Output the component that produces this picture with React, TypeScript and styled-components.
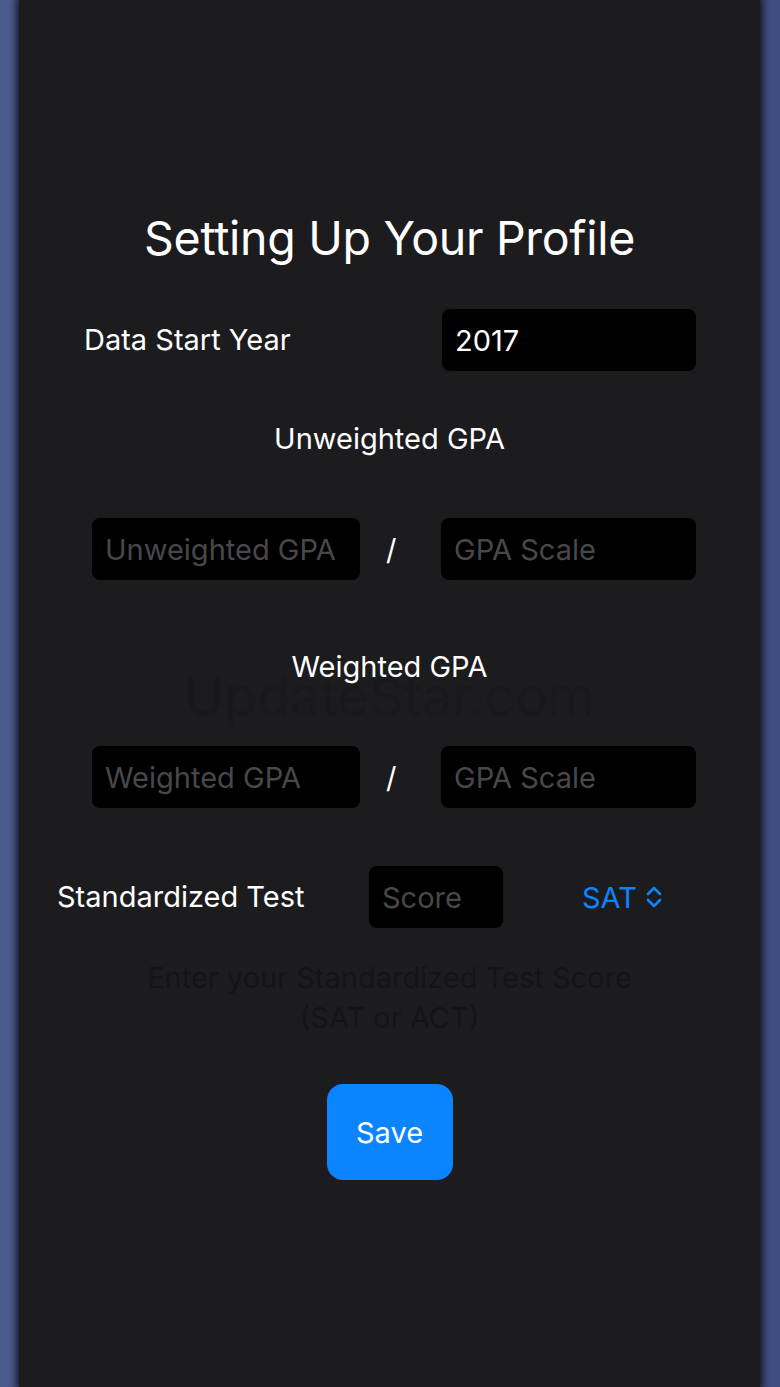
import React from "react";
import styled, { createGlobalStyle } from "styled-components";

const Global = createGlobalStyle`
  html, body { margin: 0; padding: 0; background: #4a5888; }
  body { font-family: Inter, "Noto Sans", "Liberation Sans", sans-serif; }
  * { box-sizing: border-box; }
`;

const Page = styled.div`
  width: 780px;
  height: 1387px;
  background: linear-gradient(90deg, #4d5b8c 0%, #46548a 50%, #3f4d80 100%);
  display: flex;
  overflow: hidden;
`;

const Sheet = styled.div`
  position: relative;
  margin-left: 19px;
  width: 741px;
  height: 100%;
  background: #1c1c1e;
  box-shadow: 0 0 7px 3px rgba(12, 14, 24, 0.85);
  display: flex;
  flex-direction: column;
  align-items: center;
  padding-top: 210px;
  color: #fff;
`;

const Title = styled.h1`
  margin: 0;
  font-size: 46.5px;
  line-height: 56px;
  font-weight: 400;
  letter-spacing: -0.3px;
`;

const Row = styled.div<{ $top: number; $left: number; $width: number }>`
  margin-top: ${(p) => p.$top}px;
  align-self: flex-start;
  margin-left: ${(p) => p.$left}px;
  width: ${(p) => p.$width}px;
  height: 62px;
  display: flex;
  align-items: center;
`;

const Label = styled.span<{ $width?: number }>`
  font-size: 29px;
  line-height: 34px;
  ${(p) => (p.$width ? `width: ${p.$width}px;` : "flex: 1;")}
`;

const SectionLabel = styled.div<{ $top: number }>`
  margin-top: ${(p) => p.$top}px;
  font-size: 29px;
  line-height: 30px;
`;

const Field = styled.div<{ $width: number; $filled?: boolean }>`
  width: ${(p) => p.$width}px;
  height: 62px;
  background: #000;
  border-radius: 8px;
  display: flex;
  align-items: center;
  padding-left: 13px;
  font-size: 29px;
  color: ${(p) => (p.$filled ? "#ffffff" : "#48484b")};
  white-space: nowrap;
  overflow: hidden;
`;

const Slash = styled.span`
  font-size: 29px;
  margin: 0 46px 0 26px;
  width: 9px;
  text-align: center;
`;

const Picker = styled.div`
  display: flex;
  align-items: center;
  gap: 8px;
  margin-left: 79px;
  color: #0a84ff;
  font-size: 29px;
`;

const Helper = styled.p`
  margin: 30px 0 0;
  font-size: 29px;
  line-height: 40px;
  text-align: center;
  color: #141416;
`;

const SaveButton = styled.button`
  margin-top: 46px;
  width: 126px;
  height: 96px;
  border: none;
  border-radius: 16px;
  background: #0a84ff;
  color: #fff;
  font-family: inherit;
  font-size: 29px;
`;

const Watermark = styled.div`
  position: absolute;
  left: 0;
  right: 0;
  top: 683px;
  text-align: center;
  font-size: 54px;
  line-height: 28px;
  color: #19191b;
  pointer-events: none;
`;

const ChevronUpDown = () => (
  <svg width="18" height="24" viewBox="0 0 18 24" fill="none">
    <path d="M3 9 L9 3 L15 9" stroke="#0a84ff" strokeWidth="2.6" strokeLinecap="round" strokeLinejoin="round" />
    <path d="M3 15 L9 21 L15 15" stroke="#0a84ff" strokeWidth="2.6" strokeLinecap="round" strokeLinejoin="round" />
  </svg>
);

export default function App() {
  return (
    <>
      <Global />
      <Page>
        <Sheet>
          <Watermark>UpdateStar.com</Watermark>
          <Title>Setting Up Your Profile</Title>
          <Row $top={43} $left={65} $width={612}>
            <Label>Data Start Year</Label>
            <Field $width={254} $filled>2017</Field>
          </Row>
          <SectionLabel $top={53}>Unweighted GPA</SectionLabel>
          <Row $top={64} $left={73} $width={610}>
            <Field $width={268}>Unweighted GPA</Field>
            <Slash>/</Slash>
            <Field $width={255}>GPA Scale</Field>
          </Row>
          <SectionLabel $top={72}>Weighted GPA</SectionLabel>
          <Row $top={64} $left={73} $width={610}>
            <Field $width={268}>Weighted GPA</Field>
            <Slash>/</Slash>
            <Field $width={255}>GPA Scale</Field>
          </Row>
          <Row $top={58} $left={38} $width={640}>
            <Label $width={312}>Standardized Test</Label>
            <Field $width={134}>Score</Field>
            <Picker>
              SAT
              <ChevronUpDown />
            </Picker>
          </Row>
          <Helper>
            Enter your Standardized Test Score
            <br />
            (SAT or ACT)
          </Helper>
          <SaveButton>Save</SaveButton>
        </Sheet>
      </Page>
    </>
  );
}
